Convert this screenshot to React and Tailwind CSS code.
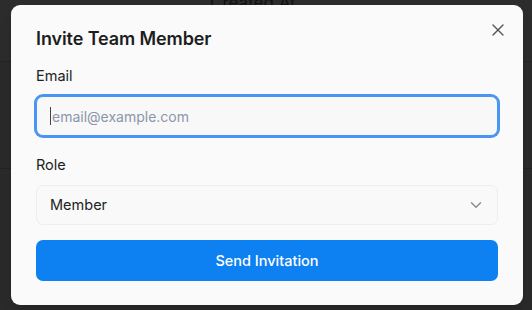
import React from "react";

function XIcon() {
  return (
    <svg width="20" height="20" viewBox="0 0 24 24" fill="none" stroke="#555" strokeWidth="1.6" strokeLinecap="round" strokeLinejoin="round">
      <path d="M18 6 6 18" />
      <path d="m6 6 12 12" />
    </svg>
  );
}

function ChevronDown() {
  return (
    <svg width="18" height="18" viewBox="0 0 24 24" fill="none" stroke="#888" strokeWidth="1.8" strokeLinecap="round" strokeLinejoin="round">
      <path d="m6 9 6 6 6-6" />
    </svg>
  );
}

export default function App() {
  return (
    <div className="relative h-[310px] w-[532px] overflow-hidden bg-[#2a2a2a] font-['Inter','Noto_Sans',sans-serif]">
      {/* background page */}
      <div className="flex h-[62px] border-b border-[#232323] bg-[#2c2c2c]">
        <div className="ml-[210px] -mt-[9px] text-[17px] text-[#111]">Created At</div>
      </div>
      <div className="h-[107px] border-b border-[#232323]" />

      {/* overlay + dialog */}
      <div className="absolute inset-0 flex items-center justify-center pl-[2px]">
        <div className="relative flex h-[300px] w-[512px] flex-col rounded-[9px] bg-[#fafafa] pl-[25px] pr-[25px] pt-6 shadow-lg">
          <button className="absolute right-[15px] top-[15px]">
            <XIcon />
          </button>
          <h2 className="text-[18px] font-semibold leading-[20px] tracking-[-0.1px] text-[#1d1d1f]">
            Invite Team Member
          </h2>
          <label className="mt-[17px] text-[14.5px] leading-[20px] text-[#222]">Email</label>
          <div className="mt-[10px] flex h-10 items-center rounded-[7px] border border-[#4a95f2] bg-[#f8f8f8] pl-[13px] ring-2 ring-[#4a95f2]">
            <span className="mr-px h-[18px] w-px bg-[#444]" />
            <span className="text-[14px] text-[#8b96a8]">email@example.com</span>
          </div>
          <label className="mt-[19px] text-[14.5px] leading-[20px] text-[#222]">Role</label>
          <div className="mt-[10px] flex h-10 items-center justify-between rounded-[7px] border border-[#eeeeee] bg-[#f9f9f9] pl-[13px] pr-3">
            <span className="text-[14.5px] text-[#222]">Member</span>
            <ChevronDown />
          </div>
          <button className="mt-[15px] flex h-[41px] items-center justify-center rounded-[7px] bg-[#0d80f2] text-[14.5px] font-medium text-white">
            Send Invitation
          </button>
        </div>
      </div>
    </div>
  );
}
